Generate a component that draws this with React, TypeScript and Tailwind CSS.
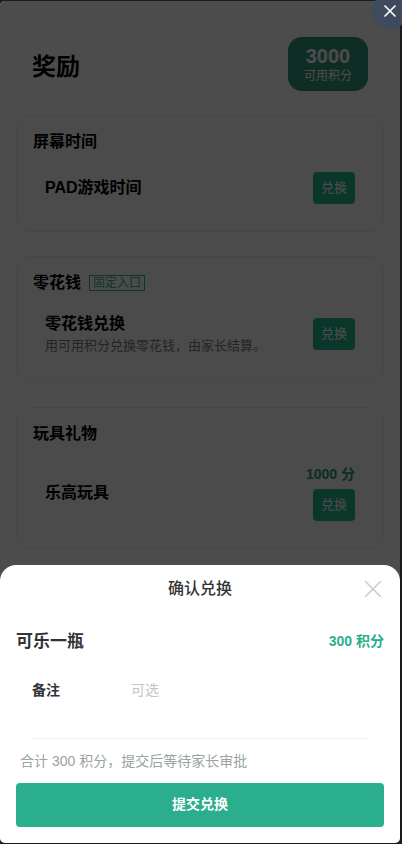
import { X } from "lucide-react";

const FONT = "font-['Liberation_Sans','Noto_Sans_CJK_SC',sans-serif]";

const ExchangeButton = () => (
  <button className="w-[42px] h-8 rounded-[4px] bg-[#27b98f] text-white text-[13px] flex items-center justify-center">
    兑换
  </button>
);

const Section = ({ children }: { children: React.ReactNode }) => (
  <div className="mx-4 rounded-[14px] border border-[#ececec] bg-[#fbfbfb] px-4 pt-[14px]">
    {children}
  </div>
);

export default function App() {
  return (
    <div className={`${FONT} relative w-[402px] h-[844px] bg-[#1c1c1c] overflow-hidden`}>
      <div className="relative mt-px w-[400px] h-[842px] rounded-[5px] overflow-hidden bg-white">
        {/* page behind the sheet */}
        <div className="flex flex-col">
          <div className="flex items-center justify-between pl-8 pr-8 pt-9 pb-6">
            <h1 className="mt-[6px] text-[24px] font-bold text-black">奖励</h1>
            <div className="w-20 h-[54px] rounded-[14px] bg-[#2f9a7c] flex flex-col items-center justify-center">
              <span className="text-[20px] font-bold leading-6 text-white">3000</span>
              <span className="text-[12px] leading-4 text-white">可用积分</span>
            </div>
          </div>

          <Section>
            <div className="text-[16px] font-bold text-black leading-6">屏幕时间</div>
            <div className="flex items-center justify-between pl-3 pr-3 pt-[18px] pb-[27px]">
              <span className="text-[16px] font-bold text-black">PAD游戏时间</span>
              <ExchangeButton />
            </div>
          </Section>

          <div className="h-6" />
          <Section>
            <div className="flex items-center gap-2 leading-6">
              <span className="text-[16px] font-bold text-black">零花钱</span>
              <span className="border border-[#2fb58e] px-[3px] text-[12px] leading-[14px] text-[#2fb58e]">
                固定入口
              </span>
            </div>
            <div className="flex items-center justify-between pl-3 pr-3 pt-[17px] pb-[26px]">
              <div className="flex flex-col">
                <span className="text-[16px] font-bold text-black leading-6">零花钱兑换</span>
                <span className="text-[13px] text-[#7b7b7b] leading-5">
                  用可用积分兑换零花钱，由家长结算。
                </span>
              </div>
              <ExchangeButton />
            </div>
          </Section>

          <div className="h-6" />
          <Section>
            <div className="text-[16px] font-bold text-black leading-6">玩具礼物</div>
            <div className="flex items-center justify-between pl-3 pr-3 pt-[18px] pb-[27px]">
              <span className="text-[16px] font-bold text-black">乐高玩具</span>
              <div className="flex flex-col items-end gap-[5px]">
                <span className="text-[14px] font-bold leading-5 text-[#2a9a78]">1000 分</span>
                <ExchangeButton />
              </div>
            </div>
          </Section>
        </div>

        {/* dim overlay */}
        <div className="absolute inset-0 bg-black/70" />

        {/* bottom sheet */}
        <div className="absolute left-0 right-0 bottom-0 h-[278px] rounded-t-[16px] bg-white flex flex-col">
          <div className="relative flex items-center justify-center h-12">
            <span className="text-[16px] font-medium text-[#333]">确认兑换</span>
            <X
              className="absolute right-[12px] top-[9px] w-[30px] h-[30px] text-[#cccccc]"
              strokeWidth={1.3}
            />
          </div>
          <div className="flex items-center justify-between px-4 pt-[16px]">
            <span className="text-[17px] font-bold text-[#333]">可乐一瓶</span>
            <span className="text-[14px] font-bold text-[#2bae8e]">300 积分</span>
          </div>
          <div className="flex items-center px-8 pt-[25px] text-[14px]">
            <span className="w-[99px] font-bold text-[#333]">备注</span>
            <span className="text-[#c4c4c4]">可选</span>
          </div>
          <div className="mx-8 mt-[37px] h-px bg-[#f0f0f0]" />
          <div className="px-5 pt-[12px] text-[14px] text-[#9aa39f] leading-5">
            合计 300 积分，提交后等待家长审批
          </div>
          <button className="mx-4 mt-[12px] h-11 rounded-[4px] bg-[#2bae8e] text-white text-[14px] font-bold">
            提交兑换
          </button>
        </div>
      </div>

      {/* floating close */}
      <div className="absolute left-[372px] top-[-7px] w-9 h-9 rounded-full bg-[#404a5f] flex items-center justify-center">
        <X className="w-5 h-5 text-white" strokeWidth={2} />
      </div>
    </div>
  );
}
